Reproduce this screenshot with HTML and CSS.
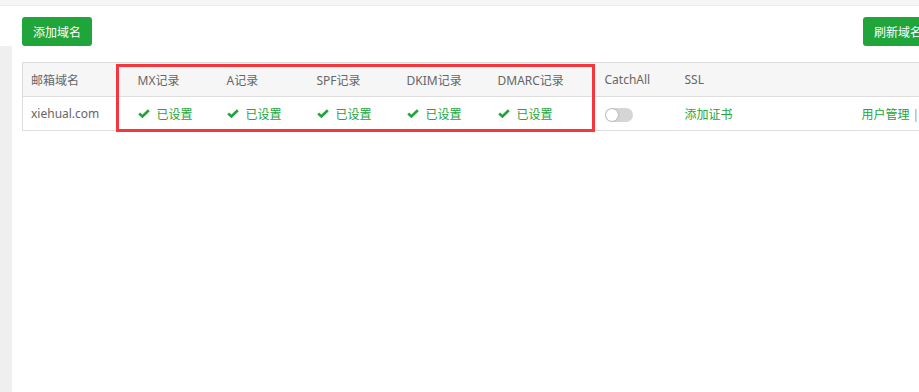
FILE: index.html
```html
<!DOCTYPE html>
<html lang="zh-CN">
<head>
<meta charset="utf-8">
<title>邮箱域名</title>
<link rel="stylesheet" href="styles.css">
</head>
<body>
<div class="topbar"></div>
<div class="layout">
  <aside class="sidebar"></aside>
  <main class="main">
    <div class="toolbar">
      <button class="btn">添加域名</button>
      <button class="btn">刷新域名</button>
    </div>
    <div class="table-wrap">
      <table class="grid">
        <colgroup>
          <col class="c-domain"><col class="c-mx"><col class="c-rec"><col class="c-rec"><col class="c-dkim"><col class="c-dmarc"><col class="c-catch"><col class="c-ssl"><col class="c-act">
        </colgroup>
        <thead>
          <tr>
            <th>邮箱域名</th><th>MX记录</th><th>A记录</th><th>SPF记录</th><th>DKIM记录</th><th>DMARC记录</th><th>CatchAll</th><th>SSL</th><th></th>
          </tr>
        </thead>
        <tbody>
          <tr>
            <td class="domain">xiehual.com</td>
            <td><span class="ok"><svg class="chk" viewBox="0 0 12 9" width="12" height="9"><polyline points="1.2,4.6 4.4,7.4 10.8,1.2"/></svg>已设置</span></td>
            <td><span class="ok"><svg class="chk" viewBox="0 0 12 9" width="12" height="9"><polyline points="1.2,4.6 4.4,7.4 10.8,1.2"/></svg>已设置</span></td>
            <td><span class="ok"><svg class="chk" viewBox="0 0 12 9" width="12" height="9"><polyline points="1.2,4.6 4.4,7.4 10.8,1.2"/></svg>已设置</span></td>
            <td><span class="ok"><svg class="chk" viewBox="0 0 12 9" width="12" height="9"><polyline points="1.2,4.6 4.4,7.4 10.8,1.2"/></svg>已设置</span></td>
            <td><span class="ok"><svg class="chk" viewBox="0 0 12 9" width="12" height="9"><polyline points="1.2,4.6 4.4,7.4 10.8,1.2"/></svg>已设置</span></td>
            <td><span class="switch"><span class="knob"></span></span></td>
            <td><a class="link">添加证书</a></td>
            <td class="act"><a class="link">用户管理</a><span class="sep">|</span><a class="link">删除</a></td>
          </tr>
        </tbody>
      </table>
      <div class="highlight"></div>
    </div>
  </main>
</div>
</body>
</html>
```

FILE: styles.css
```css
html, body {
  margin: 0;
  padding: 0;
  background: #fff;
  overflow: hidden;
  width: 919px;
  height: 392px;
  font-family: "Noto Sans", "Noto Sans CJK SC", sans-serif;
  font-size: 12px;
  color: #666;
}

.topbar {
  height: 5px;
  background: #f5f5f5;
  border-bottom: 1px solid #ebebeb;
}

.layout {
  display: flex;
  height: 386px;
}

.sidebar {
  flex: 0 0 12px;
  margin-top: 40px;
  background: #efefef;
}

.main {
  flex: 0 0 auto;
  width: 911px;
  padding: 11px 0 0 10px;
}

.toolbar {
  display: flex;
  justify-content: space-between;
  height: 29px;
}

.btn {
  flex: 0 0 auto;
  height: 29px;
  padding: 0 11px;
  border: 0;
  border-radius: 3px;
  background: #20a53a;
  color: #fff;
  font-family: "Noto Sans CJK SC", sans-serif;
  font-size: 12px;
  line-height: 29px;
}

.table-wrap {
  position: relative;
  margin-top: 16px;
}

.grid {
  border-collapse: collapse;
  table-layout: fixed;
  width: 932px;
  border: 1px solid #ddd;
}

.c-domain { width: 107px; }
.c-mx { width: 89px; }
.c-rec { width: 90px; }
.c-dkim { width: 91px; }
.c-dmarc { width: 107px; }
.c-catch { width: 80px; }
.c-ssl { width: 177px; }
.c-act { width: 100px; }

.grid th,
.grid td {
  height: 34px;
  padding: 0 0 0 8px;
  text-align: left;
  white-space: nowrap;
  font-weight: normal;
  box-sizing: border-box;
}

.grid th {
  background: #f6f6f6;
  border-bottom: 1px solid #ddd;
  color: #666;
}

.grid td {
  border-bottom: 1px solid #ddd;
}

.domain {
  color: #666;
}

.ok {
  display: inline-flex;
  align-items: center;
  color: #20a53a;
}

.chk {
  margin-right: 7px;
  fill: none;
  stroke: #20a53a;
  stroke-width: 2.7;
  stroke-linecap: butt;
  stroke-linejoin: miter;
}

.switch {
  position: relative;
  display: inline-block;
  width: 28px;
  height: 14px;
  border-radius: 7px;
  background: #d5d5d5;
  vertical-align: middle;
}

.knob {
  position: absolute;
  top: 1px;
  left: 1px;
  width: 12px;
  height: 12px;
  border-radius: 50%;
  background: #fff;
  box-shadow: 0 0 2px rgba(0, 0, 0, 0.35);
}

.link {
  color: #20a53a;
  text-decoration: none;
}

.sep {
  margin: 0 3px;
  color: #999;
}

.highlight {
  position: absolute;
  left: 94px;
  top: 2px;
  width: 479px;
  height: 68px;
  border: 3px solid #f5363c;
  box-sizing: border-box;
  pointer-events: none;
}
```
